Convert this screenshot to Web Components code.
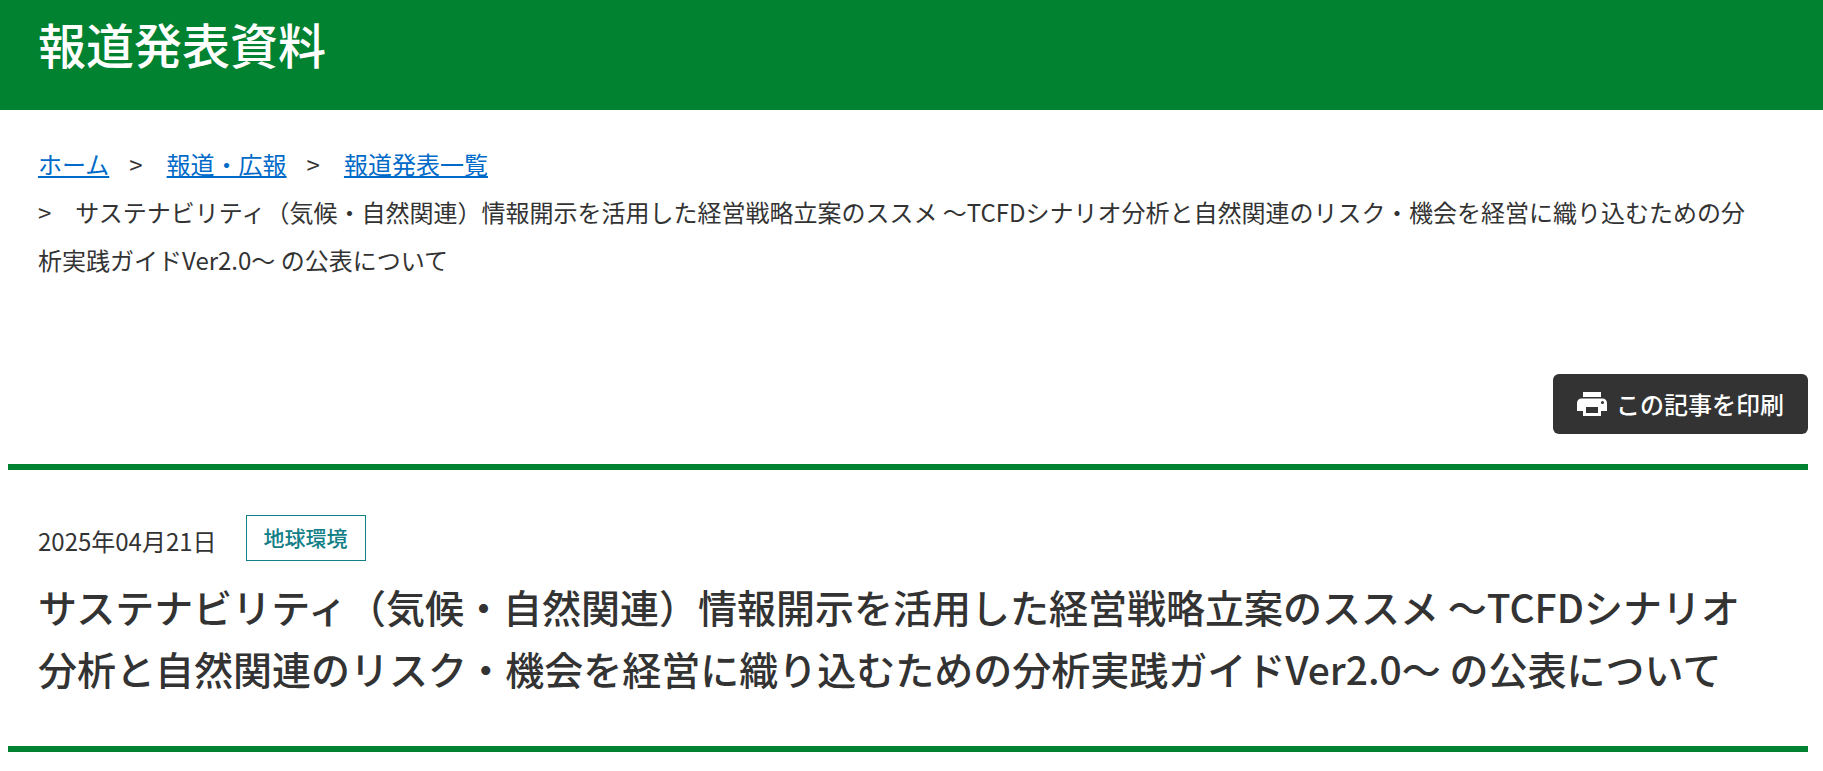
<!DOCTYPE html>
<html lang="ja">
<head>
<meta charset="utf-8">
<meta name="viewport" content="width=device-width, initial-scale=1">
<title>報道発表資料</title>
<style>
  body {
    margin: 0;
    background: #fff;
    color: #333;
    font: 400 24px/48px "Noto Sans CJK JP", sans-serif;
  }
</style>
</head>
<body>
<page-banner>報道発表資料</page-banner>
<main>
  <bread-crumbs>
    <crumb-item href="#home">ホーム</crumb-item>
    <crumb-item href="#press">報道・広報</crumb-item>
    <crumb-item href="#list">報道発表一覧</crumb-item>
    <crumb-item>サステナビリティ（気候・自然関連）情報開示を活用した経営戦略立案のススメ ～TCFDシナリオ分析と⾃然関連のリスク・機会を経営に織り込むための分析実践ガイドVer2.0～ の公表について</crumb-item>
  </bread-crumbs>
  <print-bar>この記事を印刷</print-bar>
  <article-head>
    <time slot="date" datetime="2025-04-21">2025年04月21日</time>
    <category-tag slot="tag">地球環境</category-tag>
    サステナビリティ（気候・自然関連）情報開示を活用した経営戦略立案のススメ ～TCFDシナリオ分析と⾃然関連のリスク・機会を経営に織り込むための分析実践ガイドVer2.0～ の公表について
  </article-head>
</main>
<script>
const define = (name, html, setup) => {
  const template = document.createElement('template');
  template.innerHTML = html.replace(/>\s+</g, '><').trim();
  customElements.define(name, class extends HTMLElement {
    constructor() {
      super();
      this.attachShadow({ mode: 'open' }).append(template.content.cloneNode(true));
    }
    connectedCallback() { if (setup) setup(this, this.shadowRoot); }
  });
};

define('page-banner', `
  <style>
    :host { display: block; background: #008230; color: #fff; padding: 7px 38px 31px; }
    h1 { margin: 0; font-size: 48px; line-height: 72px; font-weight: 500; }
  </style>
  <header><h1><slot></slot></h1></header>`);

define('bread-crumbs', `
  <style>
    :host { display: block; padding: 30px 38px 0; }
    nav { display: flex; flex-wrap: wrap; }
  </style>
  <nav aria-label="パンくずリスト"><slot></slot></nav>`);

define('crumb-item', `
  <style>
    :host { display: block; margin-right: 20px; }
    :host(:not(:first-child))::before { content: ">\\3000"; }
    a { color: #006ac8; text-decoration: underline; text-underline-offset: 2px; text-decoration-thickness: 2px; }
  </style>
  <a><slot></slot></a>`, (host, root) => {
    const href = host.getAttribute('href');
    const link = root.querySelector('a');
    if (href) link.href = href;
    else if (link) link.replaceWith(...link.childNodes);
  });

define('print-bar', `
  <style>
    :host { display: flex; justify-content: flex-end; padding: 90px 15px 30px 8px; }
    button {
      display: flex; align-items: center; gap: 9px; height: 60px; padding: 0 24px;
      border: 0; border-radius: 6px; background: #333; color: #fff;
      font: inherit; font-weight: 500; line-height: 36px; cursor: pointer;
    }
    svg { width: 30px; height: 24px; }
  </style>
  <button type="button">
    <svg viewBox="0 0 30 24" aria-hidden="true">
      <path fill="#fff" d="M6 0h18v5H6zM4.500 6.500h21A4.500 4.500 0 0 1 30 11v8h-6v5H6v-5H0v-8a4.500 4.500 0 0 1 4.500-4.500zM9 15v6h12v-6zM25.500 9a1.500 1.500 0 1 0 0 3 1.500 1.500 0 0 0 0-3z" fill-rule="evenodd"/>
    </svg>
    <span><slot></slot></span>
  </button>`);

define('category-tag', `
  <style>
    :host {
      display: block; border: 1px solid #138087; color: #138087; padding: 5px 17px 7px;
      font-size: 21px; line-height: 32px; font-weight: 500;
    }
  </style>
  <slot></slot>`);

define('article-head', `
  <style>
    :host {
      display: block; margin: 0 15px 0 8px; padding: 45px 36px 47px 30px;
      border: solid #008230; border-width: 6px 0;
    }
    .meta { display: flex; align-items: flex-start; gap: 29px; }
    slot[name="date"] { display: block; padding-top: 2px; }
    h2 { margin: 10px 0 0; font-size: 39px; line-height: 62px; font-weight: 500; }
  </style>
  <header>
    <div class="meta"><slot name="date"></slot><slot name="tag"></slot></div>
    <h2><slot></slot></h2>
  </header>`);
</script>
</body>
</html>
